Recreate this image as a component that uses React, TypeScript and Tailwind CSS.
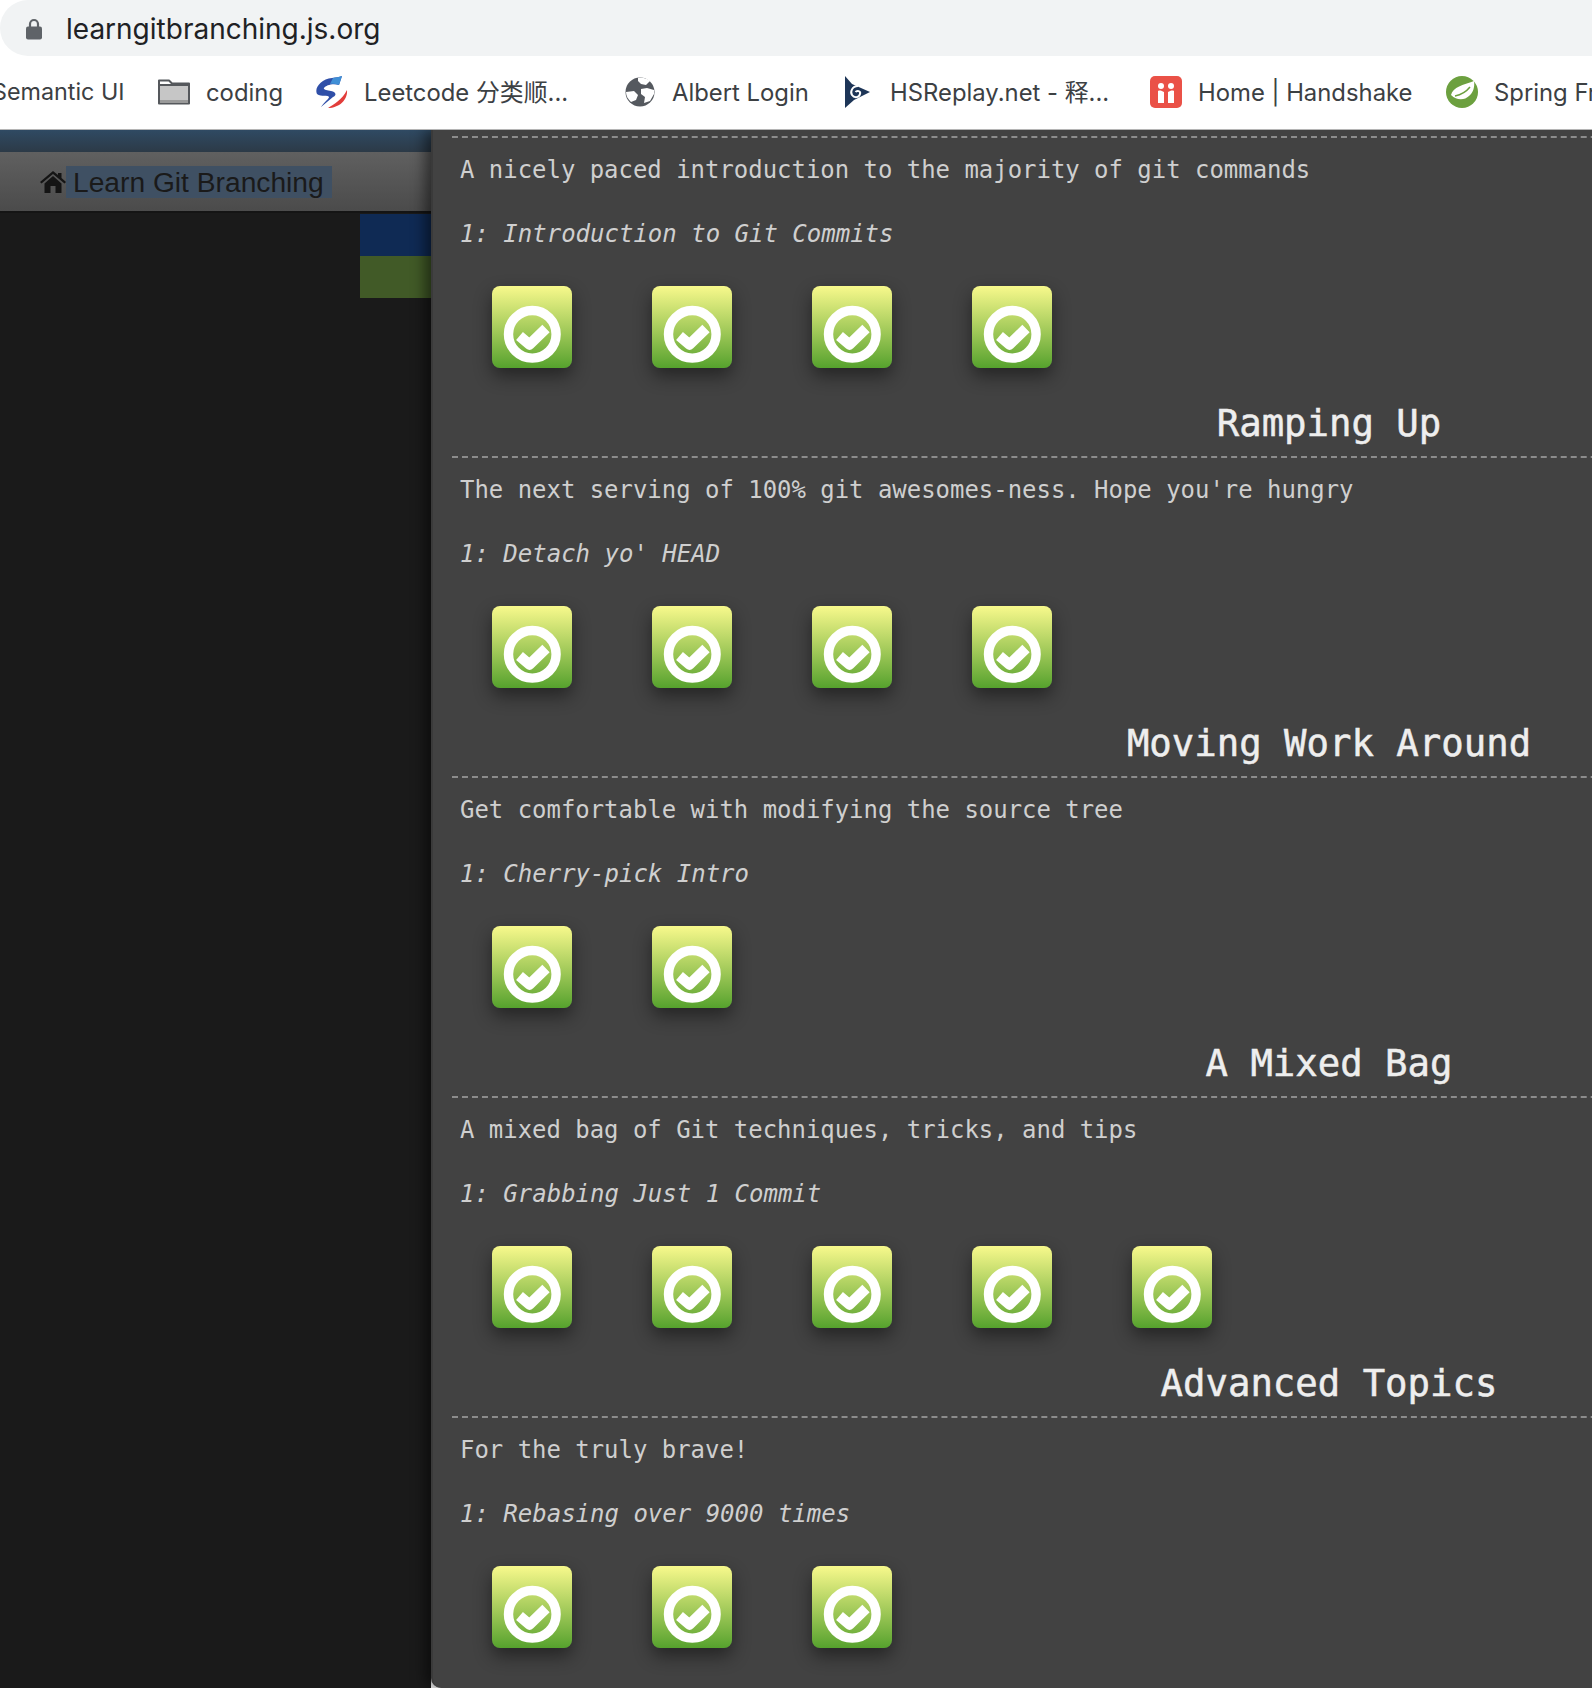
const MONO = "font-['DejaVu_Sans_Mono','Liberation_Mono',monospace]";

const SECTIONS = [
  { heading: '', desc: 'A nicely paced introduction to the majority of git commands', first: '1: Introduction to Git Commits', count: 4 },
  { heading: 'Ramping Up', desc: "The next serving of 100% git awesomes-ness. Hope you're hungry", first: "1: Detach yo' HEAD", count: 4 },
  { heading: 'Moving Work Around', desc: 'Get comfortable with modifying the source tree', first: '1: Cherry-pick Intro', count: 2 },
  { heading: 'A Mixed Bag', desc: 'A mixed bag of Git techniques, tricks, and tips', first: '1: Grabbing Just 1 Commit', count: 5 },
  { heading: 'Advanced Topics', desc: 'For the truly brave!', first: '1: Rebasing over 9000 times', count: 3 },
];

const LevelTile = () => (
  <div className="h-[82px] w-[80px] rounded-[8px] bg-gradient-to-b from-[#f8f98c] to-[#55a22d] shadow-[0_8px_18px_rgba(0,0,0,0.45)]">
    <svg width="80" height="82" viewBox="0 0 80 82">
      <circle cx="40.3" cy="48.3" r="23.8" fill="none" stroke="#fff" strokeWidth="9.4" />
      <path d="M27.5 50 L37.5 58.5 L54 42.500" fill="none" stroke="#fff" strokeWidth="10.500" strokeLinejoin="round" />
    </svg>
  </div>
);

const Section = ({ heading, desc, first, count }: (typeof SECTIONS)[number]) => (
  <div className="w-[1754px]">
    {heading && (
      <h2 className={`${MONO} h-[88px] pt-[33px] text-center text-[37.3px] leading-[45px] text-[#eeeeee] [-webkit-text-stroke:0.5px_#eeeeee]`}>
        {heading}
      </h2>
    )}
    <div className="border-t-2 border-dashed border-[#8c8c8c]">
      <p className={`${MONO} h-[81px] pt-[17px] pl-[8px] text-[23.94px] leading-[30px] text-[#cfcfcf]`}>{desc}</p>
      <p className={`${MONO} h-[67px] pl-[8px] text-[24px] leading-[30px] text-[#cfcfcf] italic`}>{first}</p>
      <div className="flex gap-[80px] pl-[40px]">
        {Array.from({ length: count }).map((_, i) => (
          <LevelTile key={i} />
        ))}
      </div>
    </div>
  </div>
);

const Bookmark = ({ icon, label, gap, width }: { icon: React.ReactNode; label: string; gap: string; width: string }) => (
  <div className={`flex flex-none items-center ${gap} ${width}`}>
    {icon}
    <span className="font-['Inter','Noto_Sans_CJK_SC',sans-serif] text-[23.85px] whitespace-nowrap text-[#3c4043]">{label}</span>
  </div>
);

const FolderIcon = () => (
  <svg width="32" height="26" viewBox="0 0 32 26" className="flex-none">
    <path d="M1 24.5V1.5h10l3 3h17v20z" fill="#fff" stroke="#55585c" strokeWidth="2" strokeLinejoin="round" />
    <path d="M2 7h28v17H2z" fill="#c6c6c6" />
    <path d="M2 21h28v3H2z" fill="#9a9a9a" />
    <path d="M1 6h30" stroke="#55585c" strokeWidth="2" />
  </svg>
);

const LeetcodeIcon = () => (
  <svg width="33" height="32" viewBox="0 0 33 32" className="flex-none">
    <path d="M27 0L24 9C18 7 11 9 9 12C8 14 12 14 16 15C21 16 22 19 18 21L6 31C10 25 14 23 14 21C14 19 6 21 2 18C-1 12 6 3 17 2C21 1.500 24 1 27 0z" fill="#2f4fa8" />
    <path d="M27 0L24 9C21 8 18 7.500 15 8L18 2C21 1.500 24 1 27 0z" fill="#3f8fd6" />
    <path d="M32 14C33 24 24 32 13 32C19 28 27 24 32 14z" fill="#e23d3a" />
  </svg>
);

const GlobeIcon = () => (
  <svg width="30" height="30" viewBox="0 0 30 30" className="flex-none">
    <circle cx="15" cy="15" r="14.5" fill="#55595f" />
    <path d="M13 1C18 0 23 2 25 4L21 8L16 7L13 4z" fill="#fff" />
    <path d="M1 15L9 14L13 18L11 23L6 25C3 22 1 19 1 15z" fill="#fff" />
    <path d="M16 12L22 11L29 13L29 17L25 24L19 26L20 20L16 17z" fill="#fff" />
  </svg>
);

const HSReplayIcon = () => (
  <svg width="27" height="32" viewBox="0 0 27 32" className="flex-none">
    <path d="M1 0L8 8L26 16L10 24L1 32z" fill="#1d3557" />
    <path d="M14 10C8 10 6 16 8 19C10 22 15 22 16 18C17 15 13 14 11.500 16" fill="none" stroke="#fff" strokeWidth="2" />
  </svg>
);

const HandshakeIcon = () => (
  <svg width="32" height="32" viewBox="0 0 32 32" className="flex-none">
    <rect width="32" height="32" rx="5" fill="#ea5147" />
    <circle cx="11" cy="10" r="3" fill="#fff" />
    <circle cx="21" cy="10" r="3" fill="#fff" />
    <path d="M8 15c2-1 4 0 6 1v11H8zM18 16c2-1 4-2 6-1v12h-6z" fill="#fff" />
  </svg>
);

const SpringIcon = () => (
  <svg width="32" height="32" viewBox="0 0 32 32" className="flex-none">
    <circle cx="16" cy="16" r="16" fill="#6ca03f" />
    <path d="M5 19C7 11 17 9 28 5C29 11 27 17 23 20C19 24 11 25 5 19z" fill="#fff" />
    <path d="M9 20C14 19 20 16 24 11" fill="none" stroke="#6ca03f" strokeWidth="1.500" />
    <path d="M28 0H32V6L30 8z" fill="#fff" />
  </svg>
);

const LockIcon = () => (
  <svg width="16" height="22" viewBox="0 0 16 22" className="flex-none">
    <path d="M4 9V6a4 4 0 0 1 8 0v3" fill="none" stroke="#5f6368" strokeWidth="2.2" />
    <rect y="8.500" width="16" height="13" rx="2" fill="#5f6368" />
  </svg>
);

const HomeIcon = () => (
  <svg width="26" height="22" viewBox="0 0 26 22" className="flex-none">
    <path d="M13 0L18 4V2H21.500V7L26 11L24.500 12.500L13 3L1.500 12.500L0 11z" fill="#141414" />
    <path d="M4.500 12.500L13 5L21.500 12.500V22H15.500V15H10.500V22H4.500z" fill="#141414" />
  </svg>
);

export default function App() {
  return (
    <div className="h-[1688px] w-[1592px] overflow-hidden bg-white">
      {/* browser chrome */}
      <div className="flex h-[56px] items-center gap-[24px] rounded-l-[28px] bg-[#f1f3f4] pt-[1px] pl-[26px]">
        <LockIcon />
        <span className="font-['Inter',sans-serif] text-[28px] text-[#202124]">learngitbranching.js.org</span>
      </div>
      <div className="flex h-[74px] items-center overflow-hidden border-b border-[#b5b5b5]">
        <div className="ml-[-8px] w-[166px] flex-none">
          <span className="font-['Inter',sans-serif] text-[23.3px] whitespace-nowrap text-[#3c4043]">Semantic UI</span>
        </div>
        <Bookmark icon={<FolderIcon />} label="coding" gap="gap-[16px]" width="w-[157px]" />
        <Bookmark icon={<LeetcodeIcon />} label="Leetcode 分类顺..." gap="gap-[16px]" width="w-[310px]" />
        <Bookmark icon={<GlobeIcon />} label="Albert Login" gap="gap-[17px]" width="w-[219px]" />
        <Bookmark icon={<HSReplayIcon />} label="HSReplay.net - 释..." gap="gap-[19px]" width="w-[306px]" />
        <Bookmark icon={<HandshakeIcon />} label="Home | Handshake" gap="gap-[16px]" width="w-[296px]" />
        <Bookmark icon={<SpringIcon />} label="Spring Framework" gap="gap-[16px]" width="w-[300px]" />
      </div>

      {/* page */}
      <div className="flex h-[1558px] overflow-hidden">
        <div className="w-[431px] flex-none bg-[#1a1a1a]">
          <div className="h-[22px] bg-gradient-to-b from-[#2f4a63] to-[#2c3a47]" />
          <div className="flex h-[61px] items-center border-b-2 border-[#141414] bg-gradient-to-b from-[#606060] to-[#4b4b4b] pl-[40px]">
            <HomeIcon />
            <span className="h-[32px] bg-[#3f5063] pr-[8px] pl-[7px] font-['Liberation_Sans',sans-serif] text-[28.2px] leading-[32px] whitespace-nowrap text-[#1a1a1a]">
              Learn Git Branching
            </span>
          </div>
          <div className="ml-auto mt-[1px] w-[71px]">
            <div className="h-[42px] bg-[#0f2a54]" />
            <div className="h-[42px] bg-[#415a27]" />
          </div>
        </div>
        <div className="relative w-[1775px] flex-none rounded-bl-[10px] border-l-2 border-[#3a3a3a] bg-[#424242] pt-[6px] pl-[19px] shadow-[-6px_0_14px_rgba(0,0,0,0.5)]">
          {SECTIONS.map((section) => (
            <Section key={section.first} {...section} />
          ))}
        </div>
      </div>
    </div>
  );
}
